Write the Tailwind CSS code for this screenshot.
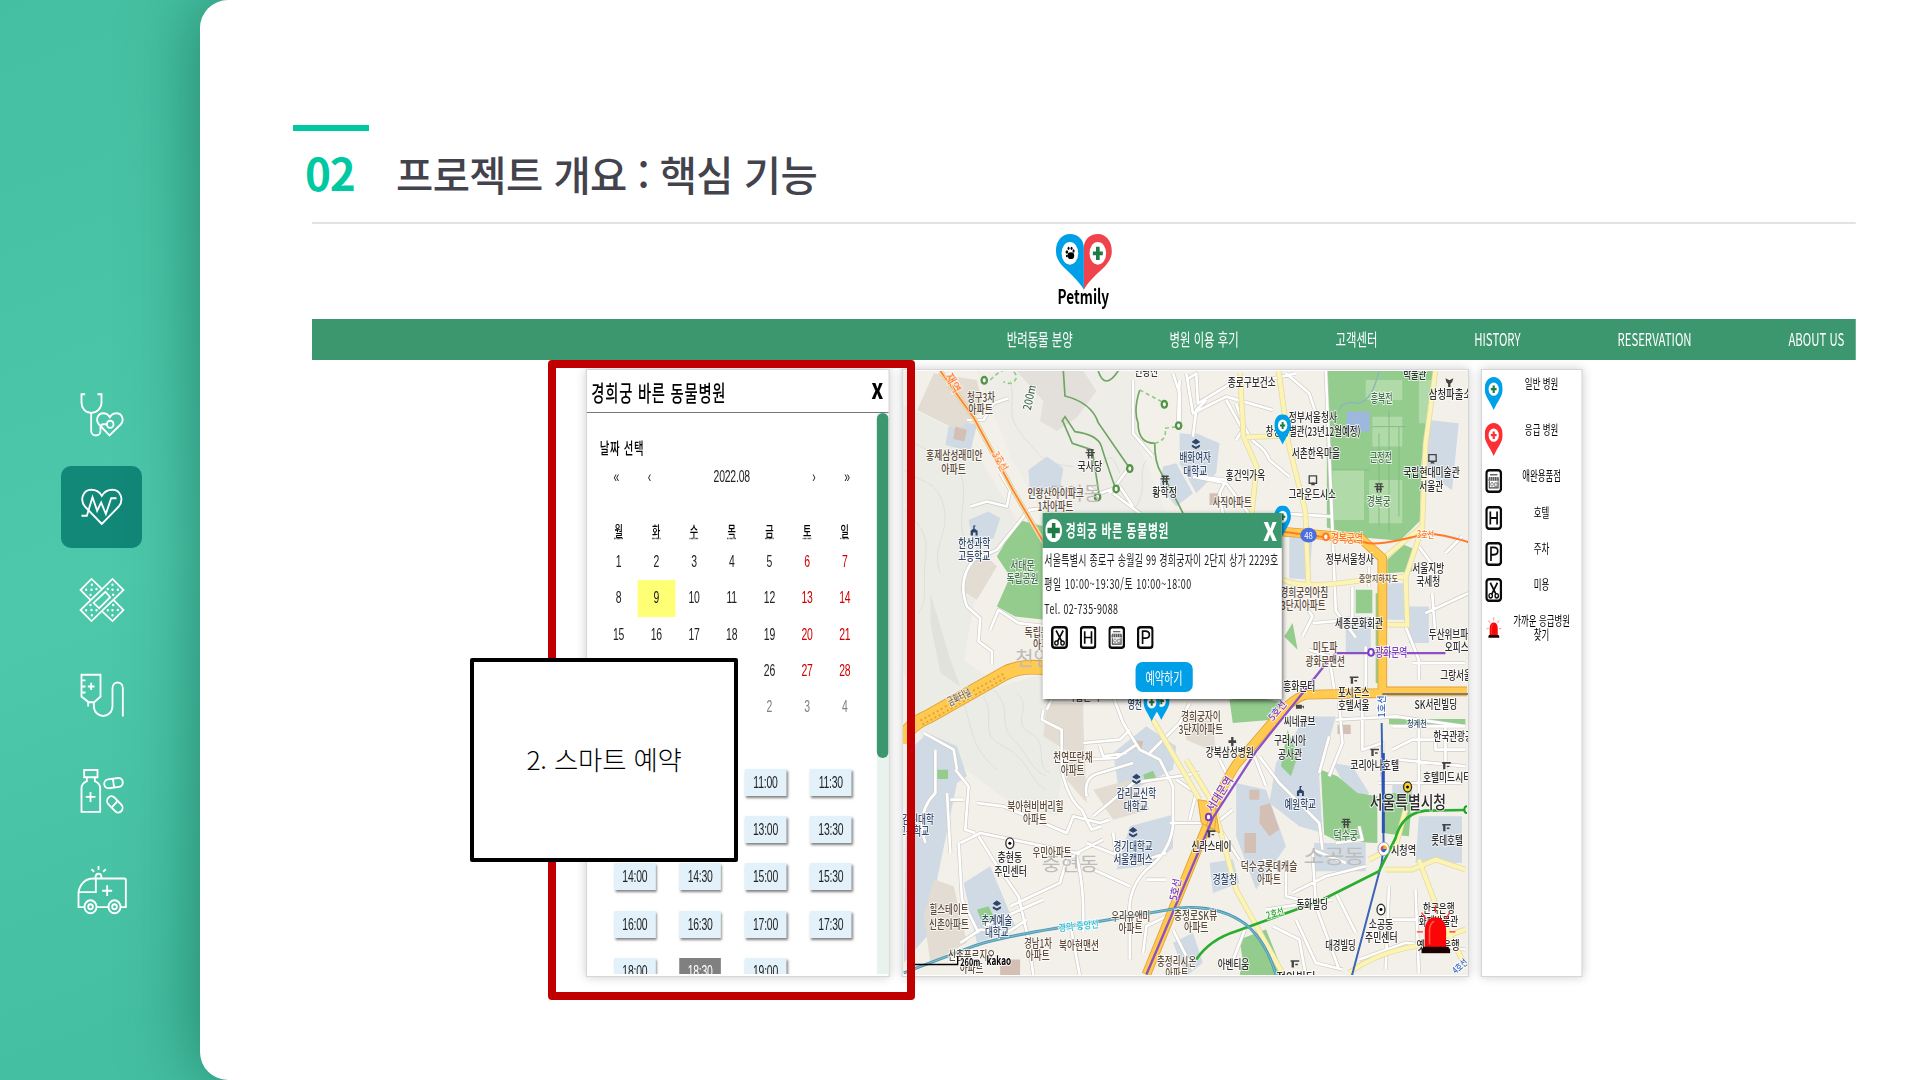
<!DOCTYPE html>
<html lang="ko">
<head>
<meta charset="utf-8">
<title>Petmily</title>
<script src="https://cdn.jsdelivr.net/npm/@tailwindcss/browser@4"></script>
</head>
<body class="w-[1920px] h-[1080px] overflow-hidden font-['Noto_Sans_CJK_KR',sans-serif] text-black bg-[#48c1a4]">
<svg class="hidden">
  <defs>
    <symbol id="pin-blue" viewBox="0 0 50 92" preserveAspectRatio="none"><path d="M25 0C10 0 0 14 0 33c0 18 15 33 25 56 10-23 25-38 25-56C50 14 40 0 25 0z" fill="#00a0e9"/><ellipse cx="25" cy="33" rx="14" ry="18" fill="#fff"/><path d="M25 23v20M17 33h16" stroke="#1e7b45" stroke-width="6"/></symbol>
    <symbol id="pin-red" viewBox="0 0 50 92" preserveAspectRatio="none"><path d="M25 0C10 0 0 14 0 33c0 18 15 33 25 56 10-23 25-38 25-56C50 14 40 0 25 0z" fill="#fb3035"/><ellipse cx="25" cy="33" rx="14" ry="18" fill="#fff"/><path d="M25 23v20M17 33h16" stroke="#fb3035" stroke-width="6"/></symbol>
    <symbol id="tile" viewBox="0 0 50 66" preserveAspectRatio="none"><rect x="3.5" y="3.5" width="43" height="59" rx="8" fill="#fff" stroke="#0a0a0a" stroke-width="7"/></symbol>
    <symbol id="t-cut" viewBox="0 0 50 66" preserveAspectRatio="none"><use href="#tile"/><g fill="none" stroke="#0a0a0a" stroke-width="4"><path d="M15 13l17 32M36 13L19 45" stroke-width="5"/><ellipse cx="16" cy="49" rx="5" ry="6"/><ellipse cx="34" cy="49" rx="5" ry="6"/></g></symbol>
    <symbol id="t-h" viewBox="0 0 50 66" preserveAspectRatio="none"><use href="#tile"/><path d="M15 15v36M35 15v36M15 33h20" stroke="#0a0a0a" stroke-width="5"/></symbol>
    <symbol id="t-p" viewBox="0 0 50 66" preserveAspectRatio="none"><use href="#tile"/><path d="M17 52V15h8c16 0 16 20 0 20h-8" fill="none" stroke="#0a0a0a" stroke-width="5"/></symbol>
    <symbol id="t-shop" viewBox="0 0 50 66" preserveAspectRatio="none"><use href="#tile"/><path d="M14 14h22v4H14z" fill="#666"/><path d="M11 22h28l2 10H9z" fill="#555"/><path d="M15 22v10M21 22v10M27 22v10M34 22v10" stroke="#fff" stroke-width="1.5"/><path d="M12 34v18h26V34" fill="none" stroke="#444" stroke-width="3"/><ellipse cx="20" cy="42" rx="4" ry="5" fill="none" stroke="#555" stroke-width="2"/><path d="M28 38h7v10h-7z" fill="none" stroke="#555" stroke-width="2"/></symbol>
    <symbol id="siren" viewBox="0 0 124 148" preserveAspectRatio="none"><path d="M6 82h18M104 82h18M20 24l14 20M105 24L92 44M62 2v22" stroke="#f33" stroke-width="4"/><path d="M30 132V78c0-26 14-40 32-40s32 14 32 40v54z" fill="#fb0507"/><path d="M44 120V78c0-14 6-24 14-28" fill="none" stroke="#ff5a50" stroke-width="5"/><path d="M24 127h78v5h4v14H20v-14h4z" fill="#1a0000"/></symbol>
  </defs>
</svg>

<div class="flex h-full bg-[linear-gradient(160deg,#45bfa1_0%,#4dc8ab_35%,#45bfa2_60%,#46bda0_100%)]">
  <!-- section icons -->
  <nav class="w-[200px] shrink-0 pl-[61px] pt-[373.5px] flex flex-col">
    <div class="w-[81px] h-[82px] flex items-center justify-center">
      <svg class="size-[54px]" viewBox="223.5 49.4 162 151.2" preserveAspectRatio="none" fill="none" stroke="#fff" stroke-width="5.5"><path d="M254 67h-11v24c0 15 12 28 29 28s31-13 31-28V67h-12M272 119v50c0 18 28 18 28 0v-8c0-6 4-10 9-10h9"/><circle cx="329" cy="151" r="10"/><path d="M327 182l-32-31c-12-15-1-31 13-31 9 0 16 5 20 11 4-6 11-11 20-11 15 0 25 17 13 31z"/></svg>
    </div>
    <div class="mt-[10.5px] w-[81px] h-[82px] flex items-center justify-center rounded-[10px] bg-[#128879]">
      <svg class="size-[54px]" viewBox="223.5 307.9 162 151.2" preserveAspectRatio="none" fill="none" stroke="#fff" stroke-width="5.5"><path d="M304 431l-50-48c-18-20-6-48 18-48 14 0 26 6 32 17 6-11 18-17 32-17 24 0 36 28 18 48z"/><path d="M243 408h16l17-52 14 38 12-23 14 32 16-44h16"/></svg>
    </div>
    <div class="mt-[11px] w-[81px] h-[82px] flex items-center justify-center">
      <svg class="size-[54px]" viewBox="223.5 568.4 162 151.2" preserveAspectRatio="none" fill="none" stroke="#fff" stroke-width="5"><path d="M273 703l-33-31 96-87 33 31zM304 613l-31-28-33 31 31 29M305 676l31 27 33-31-31-29M279 652l36-31 14 15-33 31z"/><g stroke-width="7" stroke-linecap="round"><path d="M274 601v0M257 615v0M273 615v0M288 613v0M270 630v0M336 601v0M322 613v0M336 615v0M352 615v0M338 629v0M270 658v0M257 673v0M273 672v0M288 673v0M274 687v0M338 658v0M322 673v0M336 673v0M352 672v0M336 687v0"/></g></svg>
    </div>
    <div class="mt-[12.5px] w-[81px] h-[82px] flex items-center justify-center">
      <svg class="size-[54px]" viewBox="223.5 835.4 162 151.2" preserveAspectRatio="none" fill="none" stroke="#fff" stroke-width="5.5"><path d="M243 854h57v61l-19 16h-17l-21-16zM263 931v12M244 870h11M244 887h11M244 904h11M262 887h20M272 877v20M280 931v10c0 38 56 38 56 0v-49c0-21 31-21 31 0v79"/></svg>
    </div>
    <div class="mt-[14px] w-[81px] h-[82px] flex items-center justify-center">
      <svg class="size-[54px]" viewBox="223.5 1102.9 162 151.2" preserveAspectRatio="none" fill="none" stroke="#fff" stroke-width="5.5"><path d="M251 1120h40v20h-40zM259 1141v10c-10 4-16 10-16 20v66h56v-66c0-10-6-16-16-20v-10M256 1195h29M270 1181v28"/><rect x="311" y="1144" width="56" height="25" rx="12.500" transform="rotate(-7 339 1156)"/><rect x="316" y="1203" width="54" height="26" rx="13" transform="rotate(43 343 1216)"/><path d="M337 1144l4 25M333 1225l17-17"/></svg>
    </div>
    <div class="mt-[17px] w-[81px] h-[82px] flex items-center justify-center">
      <svg class="size-[54px]" viewBox="223.5 1380.4 162 151.2" preserveAspectRatio="none" fill="none" stroke="#fff" stroke-width="5.5"><path d="M250 1504h-16v-42c4-22 20-38 44-38h94c3 0 4 2 4 4v76h-16M290 1504h33M234 1462h52v-37M305 1458h30M320 1443v30M285 1422c0-15 18-15 18 0M294 1389v11M273 1398l8 7M316 1398l-8 7"/><circle cx="270" cy="1503" r="18"/><circle cx="270" cy="1503" r="7"/><circle cx="342" cy="1503" r="18"/><circle cx="342" cy="1503" r="7"/></svg>
    </div>
  </nav>

  <main class="relative grow bg-white rounded-l-[28px] shadow-[-4px_0_70px_rgba(0,80,60,0.5)]">
    <header class="h-[222px] pl-[93px] pt-[125px]">
      <div class="w-[76px] h-[6px] bg-[#00c8a0]"></div>
      <h1 class="flex items-center mt-[14px] h-[56px] pl-[12px] font-bold">
        <span class="w-[91px] text-[44px] tracking-[-1.200px] leading-[56px] -mt-[2px] text-[#00c8a0]">02</span>
        <span class="text-[40.500px] tracking-[-0.600px] mt-[2px] font-medium text-[#43434d] whitespace-nowrap">프로젝트 개요 : 핵심 기능</span>
      </h1>
    </header>

    <!-- product screen, condensed horizontally -->
    <div class="ml-[112px] w-[1544px] h-[800px] overflow-hidden">
    <section class="w-[2375.4px] scale-x-65 origin-top-left border-t-2 border-[#e2e2e2]">
      <div class="h-[95px] flex justify-center pt-[10px]">
        <svg class="w-[88px] h-[80px] overflow-visible" viewBox="75 28 172 240" preserveAspectRatio="none">
          <path d="M160 195V70C160 45 142 28 118 28S76 48 76 80c0 45 50 60 84 115z" fill="#00a0e9"/>
          <path d="M160 195V70c0-25 18-42 42-42s42 20 42 52c0 45-50 60-84 115z" fill="#ef444b"/>
          <ellipse cx="118" cy="86" rx="25" ry="34" fill="#fff"/><ellipse cx="202" cy="86" rx="25" ry="34" fill="#fff"/>
          <path d="M202 66v40M187 86h30" stroke="#1e7b45" stroke-width="11"/>
          <ellipse cx="121" cy="93" rx="10" ry="10"/><ellipse cx="109" cy="82" rx="4" ry="5"/><ellipse cx="114" cy="71" rx="3" ry="5"/><ellipse cx="123" cy="71" rx="3" ry="5"/><ellipse cx="109" cy="94" rx="3" ry="4"/><ellipse cx="129" cy="79" rx="3" ry="5"/>
          <text x="81" y="238" textLength="155" lengthAdjust="spacingAndGlyphs" font-family="Noto Sans CJK KR" font-weight="700" font-size="60">Petmily</text>
        </svg>
      </div>
      <div class="h-[41px] bg-[#3c976e] flex items-center justify-end gap-[149px] pr-[18px] text-white text-[17.500px] whitespace-nowrap">
        <span>반려동물 분양</span><span>병원 이용 후기</span><span>고객센터</span><span>HISTORY</span><span>RESERVATION</span><span>ABOUT US</span>
      </div>
      <div class="flex justify-center gap-[18px] pt-[9px]">

        <!-- reservation -->
        <div class="w-[468px] h-[607.500px] border-x-2 border-y border-[#d6d6d6] bg-white shadow-[0_0_12px_rgba(0,0,0,0.2)] flex flex-col">
          <div class="h-[43px] shrink-0 border-b border-[#777] flex items-center justify-between pl-[7px] pr-[10px]">
            <span class="text-[22px] tracking-[1.200px] font-medium whitespace-nowrap">경희궁 바른 동물병원</span>
            <span class="text-[21px] font-black scale-x-130">X</span>
          </div>
          <div class="flex h-[561px] overflow-hidden">
            <div class="grow pt-[22px] pl-[20px]">
              <div class="text-[16px] tracking-[1px] font-medium leading-[24px]">날짜 선택</div>
              <div class="mt-[5px] h-[26px] w-[406px] grid grid-cols-[51px_51px_1fr_51px_51px] items-center text-center font-['Liberation_Sans',sans-serif] text-[16px] text-[#222]">
                <span>«</span><span>‹</span><span class="tracking-[-0.300px]">2022.08</span><span>›</span><span>»</span>
              </div>
              <div id="weekdays" class="mt-[22px] h-[36px] w-[406px] grid grid-cols-7 items-center text-center text-[14px] font-medium"></div>
              <div id="days" class="-mt-[4px] w-[406px] grid grid-cols-7 auto-rows-[36.300px] text-center leading-[36px] text-[16px] tracking-[-0.300px] font-['Liberation_Sans',sans-serif]"></div>
              <div id="times" class="mt-[43.500px] ml-[22px] grid grid-cols-[repeat(4,64px)] auto-rows-[27px] gap-x-[36.500px] gap-y-[20.200px] text-center leading-[27px] text-[16px] tracking-[-0.300px] text-[#222] font-['Liberation_Sans',sans-serif]"></div>
            </div>
            <div class="w-[18px] shrink-0 bg-[#e8f3ee]"><div class="h-[345px] rounded-[9px/6px] bg-[#3c976e]"></div></div>
          </div>
        </div>

        <!-- map -->
        <div class="relative w-[873px] h-[607.500px] border-x-2 border-y border-[#d6d6d6] p-[1px] bg-white shadow-[0_0_12px_rgba(0,0,0,0.2)]">
          <svg id="map" class="block w-full h-full" viewBox="9 33 1696 1812" preserveAspectRatio="none">
            <rect width="1710" height="1860" fill="#f3f0ea"/>
            <!-- hillside -->
            <path d="M0 130L200 230 350 480 240 640 190 900 300 980 470 930 440 1090 490 1200 470 1370 330 1330 160 1200 60 1130 0 900z" fill="#ebece6"/>
            <path d="M230 33h470l10 200 90 230H430L330 290z" fill="#eeede8"/>
            <path d="M350 33h200l40 60-60 80-60 40-50-30 10-60z" fill="#e3dfda"/>
            <path d="M90 700l60 200 30 80-60-40-30-150z" fill="#e2e2dc"/>
            <g fill="none" stroke="#dedfd8" stroke-width="3">
              <path d="M20 230c60 60 130 40 160 110s-20 150 20 210M10 330c70 50 100 30 120 110s-40 120-10 200M15 450c40 50 70 60 60 150s10 110-20 160M330 60c20 80-20 100 40 170s60 80 150 90M600 330c30-60 40-40 60 10M350 1000c50 40-20 90 40 120s10 100 60 120M250 1010c40 70-20 110 60 150s80 110 130 130M280 990c60 60 10 100 60 150s50 90 100 110M190 1030c30 90 20 130 100 200M740 300c-30 40 10 100-40 150"/>
            </g>
            <!-- built-up blocks and campuses -->
            <g fill="#d0dae4">
              <path d="M150 170l80 25-20 80-75-20zM385 330l55-40 50 35-10 60-90 25zM205 480l60-25 35 20-20 60-60 20zM790 320l40-10 50 90-50 40-50-60zM840 220l60 5 20 110-80-20z"/>
              <path d="M20 1180l60-60 90 40 30 90-30 20-60 290-30 170-70 80zM190 1570l80-50 80 190-120 40zM640 1180l100-80 90 60-10 70-160 80zM690 1400l130-35v100l-60 50-110 15z"/>
              <path d="M890 220l70 30-10 90-60 60-50-90zM1590 180l90 10-20 200-90-60zM1460 670h60v110h-60zM1170 520l70 10-10 130-60-5zM1340 770h75v110h-75zM1530 740h60v110h-60zM1220 1070h90l-50 180 10 170-70-20-90-70 20-120zM1300 1210l60 10 50 80-40 40zM1245 1450h155v85h-155zM1560 1370h130v140h-140zM1010 1270l90 20 60 170-90 130-60-160zM930 1510l70-10 20 70-80 30zM1480 1270h60v50h-60zM820 1750l60-30 30 90-50 40z"/>
            </g>
            <g fill="#e2dcd3"><path d="M100 40l130 20 20 90-80 60-120-60zM440 1030h110v90l-40 60-80-50zM500 1130l50-50 10 250-60-70zM580 1290l110-30 60 90-110 30zM100 1560l60 20 40 170-110 60-20-140zM860 1050l80 40 10 90-90-40zM230 560l60 60-60 100-50-30zM1460 150l60 10v80h-60z"/></g>
            <g fill="#d3bfb3"><path d="M165 200l35 10-8 35-33-8zM930 400h35v35h-35zM1082 1340l30-10 28 80-30 20-30-40zM1035 1420h35v60h-35zM1315 1095h40v28h-40zM300 1800h60v50h-60zM700 1140l30 5-5 25-25-5zM1050 1290h30v30h-30z"/></g>
            <!-- parks -->
            <g fill="#94cc8e">
              <path d="M1283 33h325l-40 270-5 180-60 60-110-10-110-30z"/>
              <path d="M355 480l80 20v280l-90-10-55-30 40-90-40-60z"/>
              <path d="M1265 1230l50 20 60 50 60 10v140l-120-5-40-20zM1450 1300h90l-10 130-80-10zM990 1020l70-10 100 20-40 50-120 10zM1020 1740l80-30 40 100 10 40h-130l10-50zM1465 600l50-45 25 10v70l-75 5zM1370 690h50v70h-50zM1430 700h17v270h-17zM1165 1110l30 80-20 60-30-30zM1180 790l15 80-40-40zM230 1650l35-10 20 40-35 20z"/>
              <path d="M1470 1078h230v16h-230zM107 1230h36v28h-36zM730 1245l30-12 10 22-32 14z"/>
            </g>
            <g fill="#b0dba8"><path d="M1300 330h95v150h-95zM1400 60h110v60h-110zM1420 170h90v90h-90zM1410 360h100v130h-100zM1560 60h40l-20 130h-20z"/></g>
            <path d="M1342 155h70v60h-70z" fill="#9db8dc"/>
            <path d="M1320 150q10-30 60-20 40-10 60-97" fill="none" stroke="#8fb6b5" stroke-width="4"/>
            <path d="M1420 200h100M1470 150v370M1440 220v280M1500 200v270M1300 330h110" fill="none" stroke="#85bd83" stroke-width="3"/>
            <!-- streets -->
            <defs><path id="st" d="M200 180l50 0 30-50 45-15M300 340l30 50-10 50-60-15-50 15M430 450q-50-10-60 20l-80 100-70 30q-50 60-20 140l40 35-5 70 40 30v40M270 810l25-60 60 40 90 10M820 40l20 60v100M840 60l-5 140M700 60v160l60 70M860 60l30-20 5 90 100-60M690 320l-60 80M560 380l40 20 60-20 40 60M640 400l80 60M860 40l20 120 100-50 140 40M880 230l10-80 30-30M980 120l50 90-20 30M900 350l80 10-20 40 10 60M1160 40l70 60 20 60M1100 60l90-20M1280 33l20 480 10 240 60 80M1080 480l60-20 160 10M1010 130q30 100 60 120t40 50l60 50M880 350l100 20 90 120M70 1120l90 50 10 60M105 1170v130q-60 60-30 150M165 1230l40 50-10 130 30 10M150 1320h40M230 1330l80 10 190 80 20-50 80 20 30-10M180 1450l60-30 290 60 80-40M150 1480l-10-180M175 1450l10 170 50 100M235 1430l50 80 70 100 30 130 15 110M330 1640l150-70 20-70 40-20M530 1490q20 80 20 170v60M430 1050l-5 30 60 30v120q20 90 60 120l30 60 30-10M440 1050l30-60M640 1010l30 80 50 80 60 30 40 80v120q-10 80-80 130-60 60-50 150v120M550 1150l110-10 30-30M600 1160l10 30 70-10M550 1200l100-5 60-40M560 1310q-10-60 40-70l100-30M580 1370l120-100 200-30M750 1180l90-90 30-60M810 1390h100M830 1260l60 40-20 80M560 1450l150 60 90-30M580 1530l110 50M640 1420l10 80M740 1560h60M180 1750l60-40 80 10 60-40M250 1700l180-80M510 1690l30 160M730 1780l10-80 60-30M880 1830l-60-120M960 1200l40 80M1080 1190l60 80 120 120 10 80M1050 1150l50 130M1290 1250l40-100-10-120M1260 1240l30-110M1310 1080l180-10 210 30M1390 1020v150l60-20v100M1480 1100h220M1500 1200l200 20M1560 1100v200M1640 1100v170M1480 1170l60-30h70v30h90M1440 1270h250M1380 1400l10 40-80 10M1240 1470l100 40M1160 1500v110l80 20M1240 1480l10 150M1180 1600l100-50 120-30M1090 1500l60 20M1000 1350l-50 40 70 110M1470 1580l-10 250M1550 1590l10 250M1480 1680h70M1380 1800l140-50 180 20M1040 1700l-50 130M1120 1700l80 40 20 110M1190 1680l60 130 80 20M1250 1640l70 190M1310 1600l60 120M1100 1650l200-30M1580 760l130-60M1520 800l40 100v60M1600 700l10 130M1640 580l50-50M1560 560l60 80M1400 860v150M1230 870l60 20 20 130M1180 680l60 90-30 60M1540 910h160M1360 680v100l-120 10M1410 620v60"/></defs>
            <use href="#st" fill="none" stroke="#cfccc6" stroke-width="12" stroke-linejoin="round"/>
            <use href="#st" fill="none" stroke="#fff" stroke-width="8" stroke-linejoin="round"/>
            <!-- yellow avenues -->
            <defs><path id="av" d="M1022 40l10 190 40 90-15 140M1138 33l30 220 50 200 10 230M1040 232l120-5M1610 33l-30 220-10 250-50 150M1150 660q60 30 250 0l120-10M1570 500l-110 90M1520 640l5 155-60 0M760 1080l140 240M860 1200l80 130 70 260 100 180 50 90M1520 1350l-30 110-80 40M1460 1530h80l70-30 90 30M1560 1500l60 160 80 160M1350 1840q80-60 200-80l150-50"/></defs>
            <use href="#av" fill="none" stroke="#e3dca8" stroke-width="17"/>
            <use href="#av" fill="none" stroke="#fdf4b4" stroke-width="12"/>
            <!-- trunk roads -->
            <g fill="none" stroke-linejoin="round">
              <path d="M5 1150q10-50 80-80l230-130q50-25 120-15" stroke="#dfa130" stroke-width="44"/>
              <path d="M1145 515l240 20 65 60v400h255M1450 1000l-230 5q-40 10-90 70l-120 140q-40 60-70 140l-200 490" stroke="#dfa130" stroke-width="29"/>
              <path d="M5 1150q10-50 80-80l230-130q50-25 120-15" stroke="#ffca4f" stroke-width="39"/>
              <path d="M1145 515l240 20 65 60v400h255M1450 1000l-230 5q-40 10-90 70l-120 140q-40 60-70 140l-200 490" stroke="#ffca4f" stroke-width="24"/>
              <path d="M60 1083l250-141M66 1095l250-141" stroke="#dfa53c" stroke-width="6" stroke-dasharray="6 8"/>
              <path d="M895 1320l60 10-10 80-40-20zM945 1330l15 90-40-20z" fill="#ffca4f" stroke="#e0a63a" stroke-width="3"/>
            </g>
            <!-- rail -->
            <g fill="none" stroke-width="6">
              <path d="M120 33l100 140 120 220 100 170" stroke="#d8cf9a" stroke-width="15"/><path d="M120 33l100 140 120 220 100 170" stroke="#fff6cf" stroke-width="10"/><path d="M120 33l100 140 120 220 100 170" stroke="#ff8533"/>
              <path d="M1145 515l250 32q30 10 100-5l90-20q40 0 125 25" stroke="#ff7a28"/>
              <path d="M740 1845l200-470 130-200 200-250 40-45h330" stroke="#8d50c4" stroke-width="7"/>
              <path d="M1450 1003h260" stroke="#7d7a80"/>
              <path d="M1448 1090l6 370-6 50-90 340" stroke="#3b64b4"/><path d="M1453 1180v240" stroke="#2b52b5" stroke-width="9"/>
              <path d="M890 1800q40-60 120-85l250-90 180-90 50-100q20-75 90-82l120-2" stroke="#28ad2e" stroke-width="8"/>
              <path d="M10 1840l210-80q80-30 380-75l240-40q120-10 200 50 60 50 90 150" stroke="#4f9ab3" stroke-width="9"/>
              <path d="M10 1840l210-80q80-30 380-75l240-40q120-10 200 50 60 50 90 150" stroke="#9fd0de" stroke-width="2"/>
            </g>
            <!-- trails -->
            <g fill="none" stroke="#6ea561" stroke-width="5"><path d="M490 33l5 75q80 20 100 80l90 130M485 185l10-15 30 45q70 10 80 45t40 120M487 180l30 70 60 20 20 130M720 90q-20 60-5 100 0 60 50 60 0 60 20 90t65 120"/><path d="M595 33q20 60 60 0"/><path d="M270 60q60-60 80-10-10 30-40 15M720 90l75 40M765 250q40-10 30-45l40-5" stroke="#8fcd80" stroke-dasharray="12 9"/></g>
            <g fill="#fff" stroke="#55944a" stroke-width="7"><ellipse cx="252" cy="61" rx="8" ry="10"/><ellipse cx="794" cy="133" rx="8" ry="10"/><ellipse cx="837" cy="197" rx="8" ry="10"/><ellipse cx="690" cy="326" rx="8" ry="10"/><ellipse cx="649" cy="387" rx="8" ry="10"/><ellipse cx="593" cy="411" rx="8" ry="10"/></g>
            <g id="labels" font-family="Noto Sans CJK KR"></g>
            <!-- place marks -->
            <g fill="#444">
              <path id="gate" d="M560 268h22v4h-22zM557 276h28v4h-28zM562 284h18v4h-18zM564 268h4v28h-4zM574 268h4v28h-4z"/>
              <use href="#gate" x="225" y="79"/><use href="#gate" x="869" y="102"/><use href="#gate" x="770" y="1109"/>
              <path id="hotel" d="M1352 950h26v5h-16v17h-7v-17h-3zM1366 961h8v4h-8z"/>
              <use href="#hotel" x="62" y="217"/><use href="#hotel" x="278" y="257"/><use href="#hotel" x="278" y="443"/><use href="#hotel" x="-430" y="462"/><use href="#hotel" x="-178" y="852"/>
              <path d="M1230 348h22v22h-22zM1590 284h22v20h-22z" fill="none" stroke="#444" stroke-width="4"/><path d="M1235 376l5-8h3l5 8zM1594 311l5-8h4l5 8z"/>
              <path d="M987 1142h8v-10h7v10h8v8h-8v10h-7v-10h-8z"/>
              <path d="M1640 55l12 6 12-6-4 12-5 4v10h-7V71l-5-4z"/>
              <path d="M1190 1035h18v12h-18zM1208 1040l6-3v10z"/>
            </g>
            <g fill="#2d4368">
              <path id="school" d="M211 527v-14l8-6v-10h8l-4 4v6l9 6v14h-6v-9h-8v9z"/><use href="#school" x="982" y="782"/>
              <path id="univ" d="M699 1252l11-8 11 8-11 6zM699 1262l11 6 11-6v4l-11 6-11-6z" stroke="#2d4368" stroke-width="3"/><use href="#univ" x="-10" y="160"/><use href="#univ" x="-420" y="380"/><use href="#univ" x="179" y="-1006"/>
            </g>
            <g><ellipse cx="329" cy="1451" rx="12" ry="16" fill="#fff" stroke="#333" stroke-width="4"/><circle cx="329" cy="1451" r="4.500"/><ellipse cx="1446" cy="1650" rx="12" ry="16" fill="#fff" stroke="#333" stroke-width="4"/><circle cx="1446" cy="1650" r="4.500"/><ellipse cx="1526" cy="1282" rx="12" ry="15" fill="#ffd21f" stroke="#333" stroke-width="4"/><circle cx="1526" cy="1282" r="4.500"/></g>
            <ellipse cx="1228" cy="526" rx="25" ry="22" fill="#4d6ee0"/><text x="1215" y="536" font-size="27" textLength="26" lengthAdjust="spacingAndGlyphs" fill="#fff">48</text>
            <g fill="#fff" stroke-width="6"><ellipse cx="1280" cy="531" rx="8" ry="10" stroke="#ff7a28"/><ellipse cx="1416" cy="878" rx="8" ry="10" stroke="#7b3fc4"/><ellipse cx="927" cy="1372" rx="8" ry="10" stroke="#7b3fc4"/><ellipse cx="1705" cy="1350" rx="8" ry="10" stroke="#12a51a"/><ellipse cx="1454" cy="1468" rx="17" ry="20" stroke="#a6a6a6" stroke-width="3"/></g>
            <path d="M1454 1457q11 0 10 12l-10 0z" fill="#f4b400"/><path d="M1454 1457q-11 4-9 14l9 0z" fill="#e5484d"/><path d="M1446 1472q8 14 18-4l-10 0z" fill="#3264d8"/>
            <use href="#pin-blue" x="1125" y="163" width="50" height="94"/><use href="#pin-blue" x="1125" y="437" width="50" height="94"/>
            <use href="#pin-blue" x="760" y="990" width="50" height="94"/><use href="#pin-blue" x="731" y="994" width="50" height="94"/>
            <path d="M20 1815h152v-25" fill="none" stroke="#000" stroke-width="4"/>
            <use href="#siren" x="1548" y="1635" width="124" height="148"/>
          </svg>

          <!-- clinic popup -->
          <div class="absolute left-[215px] top-[142.500px] w-[368px] h-[186px] bg-white shadow-[2px_2px_6px_rgba(0,0,0,0.7)] whitespace-nowrap">
            <div class="h-[35.500px] bg-[#3c976e] text-white flex items-center pl-[4px] pr-[9px]">
              <svg class="w-[26px] h-[23px]" viewBox="0 0 26 23" preserveAspectRatio="none"><ellipse cx="13" cy="11.500" rx="13" ry="11.500" fill="#fff"/><path d="M13 4v15M3.500 11.500h19" stroke="#1e7b45" stroke-width="5.500"/></svg>
              <span class="ml-[6px] grow text-[16.500px] tracking-[1.200px] font-bold">경희궁 바른 동물병원</span>
              <span class="text-[25px] font-black scale-x-130">X</span>
            </div>
            <div class="pl-[3px] text-[13.700px] leading-[24.300px] text-[#222]">
              <p class="tracking-[0.450px] -mt-[1px]">서울특별시 종로구 송월길 99 경희궁자이 2단지 상가 2229호</p>
              <p class="tracking-[0.850px]">평일 10:00~19:30/토 10:00~18:00</p>
              <p class="tracking-[0.600px]">Tel. 02-735-9088</p>
            </div>
            <div class="flex gap-[18px] pl-[13px] mt-[6px]">
              <svg class="w-[26px] h-[23px]"><use href="#t-cut" width="26" height="23"/></svg>
              <svg class="w-[26px] h-[23px]"><use href="#t-h" width="26" height="23"/></svg>
              <svg class="w-[26px] h-[23px]"><use href="#t-shop" width="26" height="23"/></svg>
              <svg class="w-[26px] h-[23px]"><use href="#t-p" width="26" height="23"/></svg>
            </div>
            <div class="mt-[13.500px] ml-[143px] w-[88px] h-[30px] rounded-[11px/7px] bg-[#009fe8] text-white text-[15.500px] leading-[30px] text-center">예약하기</div>
          </div>
        </div>

        <!-- legend -->
        <div class="w-[157px] h-[607.500px] border-x-2 border-y border-[#d6d6d6] bg-white shadow-[0_0_12px_rgba(0,0,0,0.2)] pt-[6.500px] pl-[4px] pr-[1px] text-[13px] leading-[14px] text-center">
          <div class="flex h-[46px]"><svg class="w-[28px] h-[34px]"><use href="#pin-blue" width="28" height="34"/></svg><span class="grow -mt-[1px]">일반 병원</span></div>
          <div class="flex h-[46.500px]"><svg class="w-[28px] h-[34px]"><use href="#pin-red" width="28" height="34"/></svg><span class="grow -mt-[1px]">응급 병원</span></div>
          <div class="flex h-[36.500px]"><svg class="w-[28px] h-[24px]"><use href="#t-shop" x="1" width="26" height="24"/></svg><span class="grow -mt-[1px]">애완용품점</span></div>
          <div class="flex h-[36px]"><svg class="w-[28px] h-[24px]"><use href="#t-h" x="1" width="26" height="24"/></svg><span class="grow -mt-[1px]">호텔</span></div>
          <div class="flex h-[36.500px]"><svg class="w-[28px] h-[24px]"><use href="#t-p" x="1" width="26" height="24"/></svg><span class="grow -mt-[1px]">주차</span></div>
          <div class="flex h-[36px]"><svg class="w-[28px] h-[24px]"><use href="#t-cut" x="1" width="26" height="24"/></svg><span class="grow -mt-[1px]">미용</span></div>
          <div class="flex"><svg class="w-[28px] h-[24px]"><use href="#siren" x="2" y="3" width="24" height="21"/></svg><span class="grow -mt-[1px]">가까운 응급병원<br>찾기</span></div>
        </div>
      </div>
    </section>
    </div>

    <!-- highlight and callout -->
    <div class="absolute left-[348px] top-[360px] w-[367px] h-[640px] border-8 border-[#c00000] rounded-[4px]"></div>
    <div class="absolute left-[270px] top-[658px] w-[268px] h-[204px] border-4 border-black rounded-[2px] bg-white flex items-center justify-center pb-[3px] text-[26.400px] tracking-[-0.200px] font-extralight whitespace-nowrap"><span>2. 스마트 예약</span></div>
  </main>
</div>

<script>
  const put = (id, html) => { document.getElementById(id).innerHTML = html; };
  put('weekdays', [...'월화수목금토일'].map(d => `<span class="underline decoration-dotted underline-offset-2">${d}</span>`).join(''));
  put('days', Array.from({length: 35}, (_, i) => {
    const n = i < 31 ? i + 1 : i - 30;
    const c = i > 30 ? 'text-[#808080]' : i % 7 > 4 ? 'text-[#d10000]' : 'text-[#222]';
    return `<span class="${c} ${i === 8 ? 'bg-[#ffff76]' : ''}">${n}</span>`;
  }).join(''));
  const times = ['10:00','10:30','11:00','11:30','12:00','12:30','13:00','13:30','14:00','14:30','15:00','15:30','16:00','16:30','17:00','17:30','18:00','18:30','19:00'];
  put('times', times.map(t => `<span class="${t === '18:30' ? 'bg-[#808080] text-white' : 'bg-[#e3f2fa] shadow-[2px_2px_3px_rgba(0,0,0,0.5)]'}">${t}</span>`).join(''));

  // colour, then [centre x, baseline, width, text, size, rotation]
  const B = '#5d4a39', N = '#34496b', D = '#2f2f2f', G = '#4a7052', O = '#ff7420', P = '#7b3fc4', W = '#bdbcb8', K = '#000';
  const L = [
    [W,[525,420,160,'무악동',56],[400,918,110,'천연',62],[510,1535,170,'충현동',58],[1305,1512,185,'소공동',62]],
    [B,[242,125,84,'청구3차'],[241,163,74,'아파트'],[162,300,170,'홍제삼성래미안'],[160,342,74,'아파트'],[467,415,170,'인왕산아이파크'],[466,453,108,'1차아파트'],[410,832,74,'독립문'],[436,869,74,'아파트'],
      [998,440,118,'사직아파트'],[1215,712,145,'경희궁의아침'],[1212,750,135,'3단지아파트'],[1278,878,74,'미도파'],[1278,918,118,'광화문맨션'],[1438,668,118,'중앙지하차도',27],
      [182,1022,75,'금화터널',30,-27],[519,1207,118,'천연뜨란채'],[518,1245,72,'아파트'],[406,1353,170,'북아현비버리힐'],[405,1392,72,'아파트'],[456,1492,118,'우민아파트'],[146,1663,118,'힐스테이트'],[146,1708,120,'신촌아파트'],
      [693,1683,118,'우리유앤미'],[692,1720,72,'아파트'],[414,1764,84,'경남1차'],[413,1800,72,'아파트'],[537,1772,120,'북아현맨션'],[888,1680,130,'충정로SK뷰'],[890,1717,74,'아파트'],[831,1820,118,'충정리시온'],[832,1855,70,'아파트'],[214,1800,142,'신촌푸르지오'],[214,1842,72,'아파트'],
      [904,1083,120,'경희궁자이'],[904,1122,135,'3단지아파트'],[1109,1534,170,'덕수궁롯데캐슬'],[1109,1572,72,'아파트'],[550,1023,100,'독립문역']],
    [N,[222,565,96,'한성과학'],[222,603,96,'고등학교'],[887,307,95,'배화여자'],[887,347,72,'대학교'],[705,1048,44,'영천'],[710,1316,118,'감리교신학'],[708,1353,72,'대학교'],[53,1392,96,'감신대학'],[40,1430,93,'고등학교'],[700,1473,118,'경기대학교'],[700,1513,118,'서울캠퍼스'],[290,1695,92,'추계예술'],[290,1733,72,'대학교'],[1203,1347,95,'예원학교'],[976,1573,74,'경찰청'],[1554,1101,60,'청계천',28]],
    [G,[367,630,74,'서대문'],[367,670,96,'독립공원'],[400,115,76,'200m',34,-78],[1448,128,66,'흥복전'],[1446,307,66,'근정전'],[1439,437,72,'경복궁'],[1340,1442,74,'덕수궁']],
    [D,[740,47,72,'인왕산'],[570,332,74,'국사당'],[795,410,74,'황학정'],[1057,80,145,'종로구보건소'],[1241,187,145,'정부서울청사'],[1242,228,285,'창성동별관(23년12월예정)'],[1250,295,145,'서촌한옥마을'],[1038,360,118,'홍건익가옥'],[1239,417,143,'그라운드시소'],[1548,57,68,'박물관'],[1655,118,130,'삼청파출소'],[1598,352,170,'국립현대미술관'],[1597,393,72,'서울관'],[1352,612,145,'정부서울청사'],[1588,640,96,'서울지방'],[1588,680,72,'국세청'],[1380,805,145,'세종문화회관'],[1649,837,118,'두산위브파'],[1674,877,72,'오피스'],[1672,962,95,'그랑서울'],
      [329,1508,74,'충현동'],[331,1548,98,'주민센터'],[1200,993,97,'흥화문터'],[1364,1012,95,'포시즌스'],[1364,1050,95,'호텔서울'],[1611,1047,128,'SK서린빌딩'],[1675,1144,142,'한국관광공사'],[1201,1099,95,'씨네큐브'],[991,1193,145,'강북삼성병원'],[1172,1157,96,'구러시아'],[1172,1197,72,'공사관'],[1427,1230,147,'코리아나호텔'],[1645,1267,145,'호텔미드시티'],[1527,1347,230,'서울특별시청',54],[1514,1485,76,'시청역'],[1645,1457,95,'롯데호텔'],[936,1474,120,'신라스테이'],[1239,1649,95,'동화빌딩'],[1620,1659,95,'한국은행'],[1619,1700,118,'화폐박물관'],[1446,1708,74,'소공동'],[1447,1747,98,'주민센터'],[1324,1772,92,'대경빌딩'],[1002,1830,95,'아벤티움'],[1618,1770,130,'옛저축은행'],[1190,1868,118,'정안빌딩']],
    [O,[147,75,60,'재역',34,60],[290,310,62,'3호선',30,60],[1343,550,97,'경복궁역'],[1580,535,52,'3호선',29]],
    [P,[1477,893,97,'광화문역'],[970,1310,118,'서대문역',34,-57],[1142,1060,66,'5호선',30,-50],[838,1592,66,'5호선',32,-78]],
    ['#2cc0d8',[537,1710,122,'경의·중앙선',30,-6]],
    ['#28a32d',[1130,1672,54,'2호선',30,-15]],
    ['#3264c8',[1458,1040,66,'1호선',28,-90],[1690,1828,50,'4호선',28,-40]],
    [K,[210,1820,60,'260m',30],[296,1816,74,'kakao',36]]
  ];
  put('labels', L.map(([c, ...rows]) => rows.map(([x, y, w, t, s = 37, r = 0]) =>
    `<text x="${x - w / 2}" y="${y}" font-size="${s}" font-weight="${c === W ? 400 : c === K ? 700 : 500}" textLength="${w}" lengthAdjust="spacingAndGlyphs" fill="${c}" ${c === W ? '' : 'stroke="#fff" stroke-opacity=".75" stroke-width="6" paint-order="stroke"'} transform="rotate(${r} ${x} ${y})">${t}</text>`).join('')).join(''));
</script>
</body>
</html>
